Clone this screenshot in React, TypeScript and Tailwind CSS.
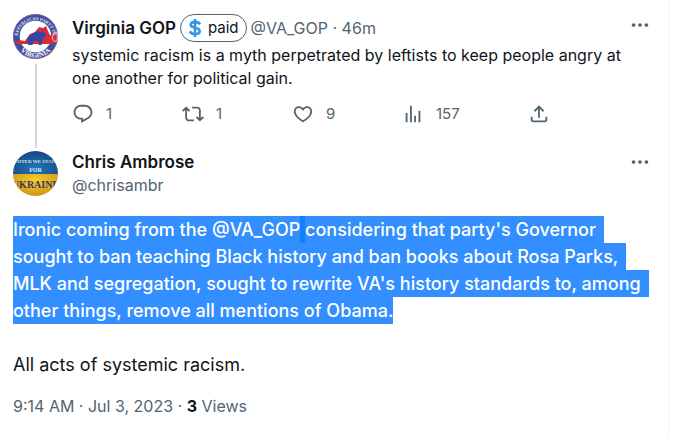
import type { ReactNode } from 'react';

const paths = {
  reply:
    'M1.751 10c0-4.42 3.584-8 8.005-8h4.366c4.49 0 8.129 3.64 8.129 8.13 0 2.96-1.607 5.68-4.196 7.11l-8.054 4.46v-3.69h-.067c-4.49.1-8.183-3.51-8.183-8.01zm8.005-6c-3.317 0-6.005 2.69-6.005 6 0 3.37 2.77 6.08 6.138 6.01l.351-.01h1.761v2.3l5.087-2.81c1.951-1.08 3.163-3.13 3.163-5.36 0-3.39-2.744-6.13-6.129-6.13H9.756z',
  repost:
    'M4.5 3.88l4.432 4.14-1.364 1.46L5.5 7.55V16c0 1.1.896 2 2 2H13v2H7.5c-2.209 0-4-1.79-4-4V7.55L1.432 9.48.068 8.02 4.5 3.88zM16.5 6H11V4h5.5c2.209 0 4 1.79 4 4v8.45l2.068-1.93 1.364 1.46-4.432 4.14-4.432-4.14 1.364-1.46 2.068 1.93V8c0-1.1-.896-2-2-2z',
  like:
    'M16.697 5.5c-1.222-.06-2.679.51-3.89 2.16l-.805 1.09-.806-1.09C9.984 6.01 8.526 5.44 7.304 5.5c-1.243.07-2.349.78-2.91 1.91-.552 1.12-.633 2.78.479 4.82 1.074 1.97 3.257 4.27 7.129 6.61 3.87-2.34 6.052-4.64 7.126-6.61 1.111-2.04 1.03-3.7.477-4.82-.561-1.13-1.666-1.84-2.908-1.91zm4.187 7.69c-1.351 2.48-4.001 5.12-8.379 7.67l-.503.3-.504-.3c-4.379-2.55-7.029-5.19-8.382-7.67-1.36-2.5-1.41-4.86-.514-6.67.887-1.79 2.647-2.91 4.601-3.01 1.651-.09 3.368.56 4.798 2.01 1.429-1.45 3.146-2.1 4.796-2.01 1.954.1 3.714 1.22 4.601 3.01.896 1.81.846 4.17-.514 6.67z',
  views: 'M8.75 21V3h2v18h-2zM18 21V8.5h2V21h-2zM4 21l.004-10h2L6 21H4zm9.248 0v-7h2v7h-2z',
  share:
    'M12 2.59l5.7 5.7-1.41 1.42L13 6.41V16h-2V6.41l-3.3 3.3-1.41-1.42L12 2.59zM21 15l-.02 3.51c0 1.38-1.12 2.49-2.5 2.49H5.5C4.11 21 3 19.88 3 18.5V15h2v3.5c0 .28.22.5.5.5h12.98c.28 0 .5-.22.5-.5L19 15h2z',
  more:
    'M3 12c0-1.1.9-2 2-2s2 .9 2 2-.9 2-2 2-2-.9-2-2zm9 2c1.1 0 2-.9 2-2s-.9-2-2-2-2 .9-2 2 .9 2 2 2zm7 0c1.1 0 2-.9 2-2s-.9-2-2-2-2 .9-2 2 .9 2 2 2z',
};

function Icon({ name }: { name: keyof typeof paths }) {
  return (
    <svg viewBox="0 0 24 24" className="size-[22px] shrink-0 fill-current" aria-hidden="true">
      <path d={paths[name]} />
    </svg>
  );
}

function Action({ icon, label, count }: { icon: keyof typeof paths; label: string; count: string }) {
  return (
    <button type="button" aria-label={label} className="flex w-[110px] items-center gap-3 text-left text-[15px] leading-5">
      <Icon name={icon} />
      <span>{count}</span>
    </button>
  );
}

function MoreButton() {
  return (
    <button type="button" aria-label="More" className="mr-1 ml-auto h-[22px] text-[#536471]">
      <Icon name="more" />
    </button>
  );
}

function VirginiaAvatar() {
  return (
    <svg viewBox="0 0 45 45" className="size-[45px] shrink-0" role="img" aria-label="Republican Party of Virginia">
      <defs>
        <path id="seal-top" d="M5.2 29a18 18 0 1 1 34.600 0" />
        <path id="seal-bottom" d="M1.500 22.500a21 21 0 0 0 42 0" />
      </defs>
      <circle cx="22.5" cy="22.5" r="22.5" fill="#3f4f9f" />
      <circle cx="22.5" cy="22.5" r="22" fill="none" stroke="#8d6f9b" strokeWidth=".8" />
      <circle cx="22.5" cy="22.5" r="15.8" fill="#fff" />
      <path d="M1 30l5-4 6 1 5-7 5-2 4-5 4 1 3-2 2 5 2 4 4 2 1 5-2 2z" fill="#dc2b38" />
      <path d="M40 20l4-2 .4 7-2 3-3-3z" fill="#dc2b38" stroke="#fff" strokeWidth=".7" />
      <path
        d="M15 31v-6c0-3 2-5 5-5 2-3 6-4 8-1l2-3 1 3c3 0 3 3 1 4l-2 .5v3l-1.5 4.5h-3V27h-5l-1 4z"
        fill="#3546a0"
      />
      <path d="M15 24c-1 2-1.500 3-1.500 5" fill="none" stroke="#3546a0" strokeWidth="1" />
      <text fill="#e5e6f5" fontSize="4.4" fontWeight="700" fontFamily="Liberation Serif, serif">
        <textPath href="#seal-top" startOffset="50%" textAnchor="middle">REPUBLICAN PARTY OF</textPath>
      </text>
      <text fill="#fff" fontSize="7" fontWeight="700" fontFamily="Liberation Serif, serif">
        <textPath href="#seal-bottom" startOffset="50%" textAnchor="middle">VIRGINIA</textPath>
      </text>
    </svg>
  );
}

function UkraineAvatar() {
  return (
    <svg viewBox="0 0 45 45" className="size-[45px] shrink-0" role="img" aria-label="Chris Ambrose">
      <defs>
        <clipPath id="round">
          <circle cx="22.5" cy="22.5" r="22.5" />
        </clipPath>
        <radialGradient id="blue" cx=".5" cy=".7" r=".8">
          <stop offset="0" stopColor="#1e76bd" />
          <stop offset="1" stopColor="#173f76" />
        </radialGradient>
        <radialGradient id="yellow" cx=".5" cy=".3" r=".8">
          <stop offset="0" stopColor="#f8cf28" />
          <stop offset="1" stopColor="#c58b16" />
        </radialGradient>
      </defs>
      <g clipPath="url(#round)" fontFamily="Liberation Serif, serif" fontWeight="700" textAnchor="middle">
        <rect width="45" height="24" fill="url(#blue)" />
        <rect y="23" width="45" height="22" fill="url(#yellow)" />
        <text x="22.5" y="12" fontSize="5" fill="#dce6ee">UNITED WE STAND</text>
        <text x="22.5" y="21" fontSize="6" fill="#dce6ee">FOR</text>
        <text x="22.5" y="37" fontSize="10" fill="#35385e">UKRAINE</text>
      </g>
    </svg>
  );
}

function Selected({ children }: { children: ReactNode }) {
  return <span className="block w-fit bg-[#338fff] pr-2 whitespace-nowrap last:pr-0">{children}</span>;
}

export default function App() {
  return (
    <main className="mr-[5px] min-h-screen border-r border-[#eff3f4] bg-white px-[13px] pt-3.5 font-[Inter,sans-serif] text-[#0f1419]">
      <article className="flex gap-3.5">
        <div className="flex flex-col items-center gap-[5px]">
          <VirginiaAvatar />
          <div className="w-0.5 grow bg-[#cfd9de]" />
        </div>
        <div className="grow pb-[23px]">
          <header className="flex h-[30px] items-start gap-1 text-base leading-7">
            <a href="#va-gop" className="text-[17px] font-semibold">Virginia GOP</a>
            <span className="flex h-7 items-center gap-1.5 rounded-full border border-[#536471] px-[7px] text-[15px]">
              <svg viewBox="0 0 14 20" className="h-5 w-3.5" aria-hidden="true">
                <path
                  d="M12 6.3C11 4.6 9.2 3.9 7 3.9c-2.500 0-4.300 1.100-4.300 2.900 0 4.200 9 1.900 9 6.200 0 1.900-1.900 3.100-4.600 3.100-2.500 0-4.400-.8-5.300-2.700M7 1v18"
                  fill="none"
                  stroke="#2f96ec"
                  strokeWidth="2.600"
                />
              </svg>
              paid
            </span>
            <span className="text-[#536471]">@VA_GOP · 46m</span>
            <MoreButton />
          </header>
          <p className="pr-4 text-base leading-[23px]">
            systemic racism is a myth perpetrated by leftists to keep people angry at
            one another for political gain.
          </p>
          <div className="mt-[13px] flex w-full max-w-[478px] items-center text-[#536471]">
            <Action icon="reply" label="Reply" count="1" />
            <Action icon="repost" label="Repost" count="1" />
            <Action icon="like" label="Like" count="9" />
            <Action icon="views" label="Views" count="157" />
            <button type="button" aria-label="Share" className="ml-auto">
              <Icon name="share" />
            </button>
          </div>
        </div>
      </article>

      <article className="mt-[3px]">
        <header className="flex gap-3.5 text-base leading-[23px]">
          <UkraineAvatar />
          <div>
            <a href="#chrisambr" className="block text-[17px] font-semibold">Chris Ambrose</a>
            <span className="block text-[#536471]">@chrisambr</span>
          </div>
          <MoreButton />
        </header>
        <div className="mt-[19px] text-lg leading-[27px]">
          <p className="font-medium text-white">
            <Selected>
              Ironic coming from the @VA_GOP<span className="inline-block h-[27px] bg-[#1180ff] align-top whitespace-pre"> </span>considering that party's Governor
            </Selected>
            <Selected>sought to ban teaching Black history and ban books about Rosa Parks,</Selected>
            <Selected>MLK and segregation, sought to rewrite VA's history standards to, among</Selected>
            <Selected>other things, remove all mentions of Obama.</Selected>
          </p>
          <p className="mt-[27px]">All acts of systemic racism.</p>
        </div>
        <footer className="mt-[17px] text-base leading-[23px] text-[#536471]">
          9:14 AM · Jul 3, 2023 · <strong className="text-[#0f1419]">3</strong> Views
        </footer>
      </article>
    </main>
  );
}
